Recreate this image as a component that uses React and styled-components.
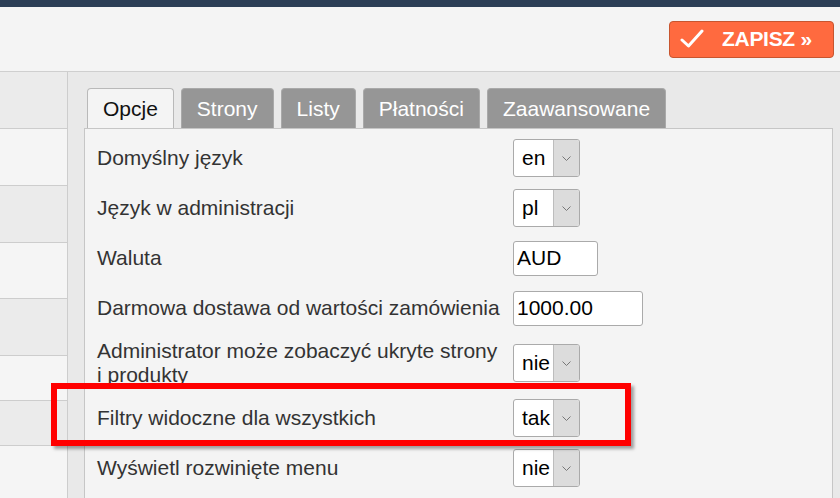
import React from "react";
import styled, { createGlobalStyle } from "styled-components";

const GlobalStyle = createGlobalStyle`
  html, body {
    margin: 0;
    padding: 0;
    overflow: hidden;
  }
  body {
    font-family: "Liberation Sans", Arial, sans-serif;
    background: #e9e9e9;
  }
`;

const Page = styled.div`
  position: relative;
  width: 840px;
  height: 498px;
  overflow: hidden;
  display: flex;
  flex-direction: column;
`;

const TopBar = styled.div`
  height: 7px;
  background: #2c3e56;
  flex-shrink: 0;
`;

const Header = styled.div`
  height: 64px;
  background: #f4f4f4;
  border-bottom: 1px solid #cfcfcf;
  display: flex;
  align-items: center;
  justify-content: flex-end;
  padding-right: 6px;
  flex-shrink: 0;
`;

const SaveButton = styled.button`
  width: 165px;
  height: 37px;
  display: flex;
  align-items: center;
  padding: 0 0 0 10px;
  background: #ff6a3f;
  border: 1px solid #c7552f;
  border-radius: 4px;
  color: #fff;
  font-family: "Liberation Sans", Arial, sans-serif;
  font-weight: bold;
  font-size: 21px;
  cursor: pointer;
`;

const ButtonLabel = styled.span`
  margin-left: 18px;
  letter-spacing: -0.3px;
`;

const Body = styled.div`
  flex: 1;
  display: flex;
  min-height: 0;
`;

const Sidebar = styled.div`
  width: 67px;
  flex-shrink: 0;
  border-right: 1px solid #cdcdcd;
  display: flex;
  flex-direction: column;
`;

const SideRow = styled.div`
  height: ${(p) => p.$h}px;
  box-sizing: border-box;
  flex-shrink: 0;
  background: ${(p) => (p.$dark ? "#ebebeb" : "#f5f5f5")};
  border-bottom: 1px solid #cdcdcd;
`;

const Main = styled.div`
  flex: 1;
  background: #e9e9e9;
  padding: 16px 7px 0 16px;
  display: flex;
  flex-direction: column;
`;

const Tabs = styled.div`
  display: flex;
  gap: 7px;
  padding-left: 3px;
  height: 40px;
`;

const Tab = styled.div`
  height: 40px;
  box-sizing: border-box;
  padding: 0 15px;
  display: flex;
  align-items: center;
  font-size: 21px;
  border: 1px solid ${(p) => (p.$active ? "#b9b9b9" : "#a9a9a9")};
  border-bottom: none;
  border-radius: 4px 4px 0 0;
  background: ${(p) => (p.$active ? "#f4f4f4" : "#969696")};
  color: ${(p) => (p.$active ? "#111" : "#fff")};
`;

const Panel = styled.div`
  flex: 1;
  background: #f4f4f4;
  border: 1px solid #c6c6c6;
  border-bottom: none;
  padding: 4px 0 0 12px;
`;

const Row = styled.div`
  display: grid;
  grid-template-columns: 416px 1fr;
  align-items: center;
  min-height: 50px;
  box-sizing: border-box;
  padding: 6px 0;
`;

const Label = styled.div`
  font-size: 21px;
  line-height: 24px;
  color: #333;
  white-space: nowrap;
`;

const Select = styled.div`
  display: flex;
  height: 38px;
  width: 67px;
  box-sizing: border-box;
  border: 1px solid #aaa;
  border-radius: 3px;
  background: #fff;
  overflow: hidden;
`;

const SelectValue = styled.div`
  flex: 1;
  display: flex;
  align-items: center;
  padding-left: 8px;
  font-size: 21px;
  color: #000;
`;

const SelectArrow = styled.div`
  width: 25px;
  background: #dcdcdc;
  border-left: 1px solid #bdbdbd;
  display: flex;
  align-items: center;
  justify-content: center;
`;

const Input = styled.div`
  width: ${(p) => p.$w}px;
  height: 35px;
  box-sizing: border-box;
  border: 1px solid #aaa;
  border-radius: 3px;
  background: #fff;
  display: flex;
  align-items: center;
  padding-left: 3px;
  font-size: 21px;
  color: #000;
`;

const Highlight = styled.div`
  position: absolute;
  left: 51px;
  top: 383px;
  width: 580px;
  height: 63px;
  box-sizing: border-box;
  border: 6px solid #ff0000;
  box-shadow: 3px 3px 3px rgba(0, 0, 0, 0.35);
  pointer-events: none;
`;

const Check = () => (
  <svg width="24" height="20" viewBox="0 0 24 20">
    <path
      d="M2 11 L8.5 17 L22 2"
      fill="none"
      stroke="#fff"
      strokeWidth="3"
      strokeLinecap="round"
      strokeLinejoin="round"
    />
  </svg>
);

const Chevron = () => (
  <svg width="9" height="5" viewBox="0 0 9 5">
    <path d="M0.5 0.5 L4.5 4.5 L8.5 0.5" fill="none" stroke="#777" strokeWidth="1" />
  </svg>
);

const Dropdown = ({ value }) => (
  <Select>
    <SelectValue>{value}</SelectValue>
    <SelectArrow>
      <Chevron />
    </SelectArrow>
  </Select>
);

const sideRows = [57, 57, 57, 56, 57, 45, 45, 80];
const tabs = ["Opcje", "Strony", "Listy", "Płatności", "Zaawansowane"];

export default function App() {
  return (
    <Page>
      <GlobalStyle />
      <TopBar />
      <Header>
        <SaveButton>
          <Check />
          <ButtonLabel>ZAPISZ »</ButtonLabel>
        </SaveButton>
      </Header>
      <Body>
        <Sidebar>
          {sideRows.map((h, i) => (
            <SideRow key={i} $h={h} $dark={i % 2 === 0} />
          ))}
        </Sidebar>
        <Main>
          <Tabs>
            {tabs.map((t, i) => (
              <Tab key={t} $active={i === 0}>
                {t}
              </Tab>
            ))}
          </Tabs>
          <Panel>
            <Row>
              <Label>Domyślny język</Label>
              <Dropdown value="en" />
            </Row>
            <Row>
              <Label>Język w administracji</Label>
              <Dropdown value="pl" />
            </Row>
            <Row>
              <Label>Waluta</Label>
              <Input $w={85}>AUD</Input>
            </Row>
            <Row>
              <Label>Darmowa dostawa od wartości zamówienia</Label>
              <Input $w={130}>1000.00</Input>
            </Row>
            <Row>
              <Label>
                Administrator może zobaczyć ukryte strony
                <br />i produkty
              </Label>
              <Dropdown value="nie" />
            </Row>
            <Row>
              <Label>Filtry widoczne dla wszystkich</Label>
              <Dropdown value="tak" />
            </Row>
            <Row>
              <Label>Wyświetl rozwinięte menu</Label>
              <Dropdown value="nie" />
            </Row>
          </Panel>
        </Main>
      </Body>
      <Highlight />
    </Page>
  );
}
